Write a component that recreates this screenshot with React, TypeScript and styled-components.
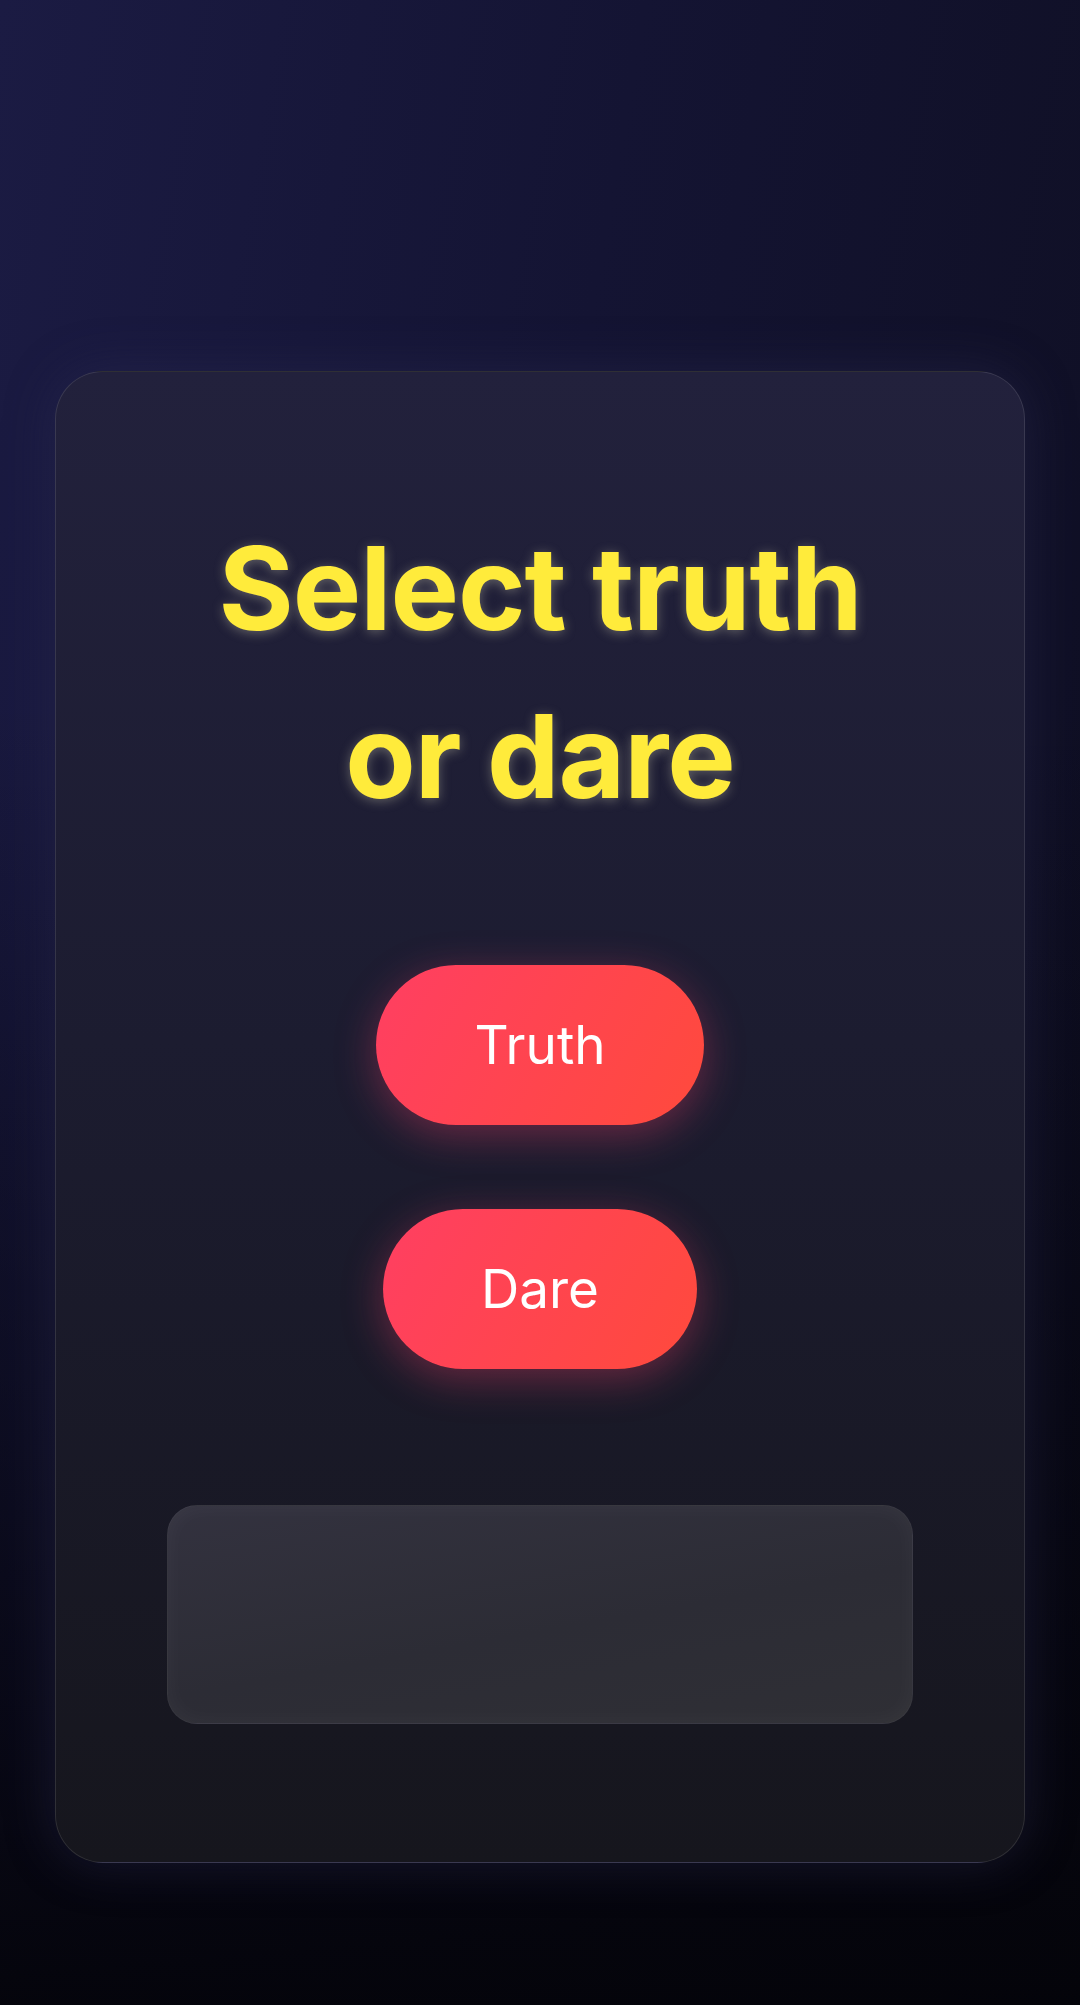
import React from "react";
import styled, { createGlobalStyle } from "styled-components";

const Global = createGlobalStyle`
  html, body {
    margin: 0;
    padding: 0;
    background: #08080e;
  }
  * { box-sizing: border-box; }
`;

const Page = styled.div`
  min-height: 2005px;
  padding: 371px 55px 142px;
  font-family: Inter, "Noto Sans", sans-serif;
  background:
    linear-gradient(180deg, rgba(0, 0, 0, 0) 35%, rgba(3, 3, 8, 0.92) 100%),
    linear-gradient(100deg, #1b1b43 0%, #141433 45%, #0e0e20 100%);
`;

const Card = styled.section`
  height: 1492px;
  display: flex;
  flex-direction: column;
  align-items: center;
  padding: 0 111px;
  border-radius: 48px;
  border: 1.5px solid rgba(255, 255, 255, 0.11);
  background: linear-gradient(180deg, #22213c 0%, #1c1c30 45%, #16161d 100%);
  box-shadow: 0 0 50px rgba(45, 45, 85, 0.45);
`;

const Title = styled.h1`
  margin: 133px 0 0;
  font-family: Inter, "Noto Sans", sans-serif;
  font-weight: 700;
  font-size: 115px;
  line-height: 168px;
  letter-spacing: -1px;
  color: #ffeb3b;
  text-align: center;
  text-shadow: 0 2px 12px rgba(230, 225, 190, 0.35);
`;

const Buttons = styled.div`
  margin-top: 124px;
  display: flex;
  flex-direction: column;
  align-items: center;
  gap: 84px;
`;

const Pill = styled.button`
  height: 160px;
  padding: 0 98px;
  border: none;
  border-radius: 80px;
  font-family: Inter, "Noto Sans", sans-serif;
  font-weight: 400;
  font-size: 53px;
  line-height: 160px;
  color: #ffffff;
  background: linear-gradient(120deg, #ff3f62 0%, #ff4a3c 100%);
  box-shadow: 0 10px 40px rgba(255, 65, 108, 0.35);
  cursor: pointer;
`;

const Panel = styled.div`
  margin-top: 136px;
  width: 100%;
  height: 219px;
  border-radius: 30px;
  border: 1px solid rgba(255, 255, 255, 0.05);
  background: linear-gradient(170deg, #33323f 0%, #2c2c35 55%, #2f2f35 100%);
  box-shadow: inset 0 0 24px rgba(255, 255, 255, 0.04);
`;

export default function App() {
  return (
    <>
      <Global />
      <Page>
        <Card>
          <Title>
            Select truth
            <br />
            or dare
          </Title>
          <Buttons>
            <Pill>Truth</Pill>
            <Pill>Dare</Pill>
          </Buttons>
          <Panel />
        </Card>
      </Page>
    </>
  );
}
